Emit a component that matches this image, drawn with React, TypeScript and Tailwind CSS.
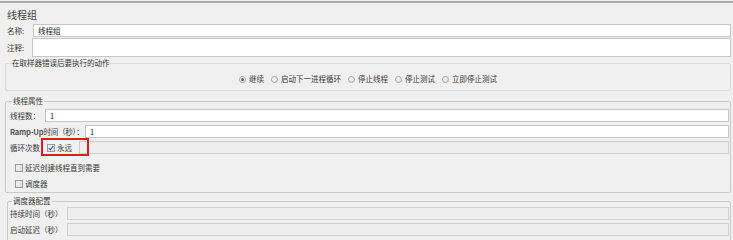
import React from 'react';

const Check = ({ checked = false }: { checked?: boolean }) => (
    <span className="flex h-[8px] w-[8px] shrink-0 items-center justify-center border border-[#9a9a9a] bg-gradient-to-br from-[#f4f4f4] to-[#dcdcdc]">
        {checked && (
            <svg width="6" height="6" viewBox="0 0 6 6">
                <path d="M0.8 3.2 L2.3 4.8 L5.3 0.8" fill="none" stroke="#2a5fb8" strokeWidth="1.1" />
            </svg>
        )}
    </span>
);

const Radio = ({ on = false, label }: { on?: boolean; label: string }) => (
    <span className="flex items-center gap-[3px]">
        <span className="flex h-[7px] w-[7px] items-center justify-center rounded-full border border-[#a4a4a4] bg-gradient-to-br from-[#fafafa] to-[#dedede]">
            {on && <span className="h-[3px] w-[3px] rounded-full bg-[#2f6fc0]" />}
        </span>
        <span>{label}</span>
    </span>
);

const Field = ({ value = '', disabled = false }: { value?: string; disabled?: boolean }) => (
    <div
        className={
            disabled
                ? 'h-full flex-1 border border-[#cfcfcf] bg-[#eeeeee]'
                : 'flex h-full flex-1 items-center border border-[#c6c6c6] bg-white pl-[4px] text-[#222]'
        }
    >
        {value}
    </div>
);

export default function App() {
    return (
        <div className="h-[240px] w-[733px] overflow-hidden whitespace-nowrap bg-[#f0f0f0] font-['Noto_Sans_CJK_SC',sans-serif] text-[7.5px] leading-none text-[#3a3a3a]">
            <div className="mt-[1px] h-[2px] bg-[#ababab]" />

            {/* title */}
            <div className="flex h-[21px] items-center pl-[7px] pt-[2px] text-[10px] text-[#444]">线程组</div>

            {/* name / comment */}
            <div className="mr-[2px] flex h-[13px] items-center">
                <span className="w-[33px] shrink-0 pl-[7px]">名称:</span>
                <Field value="线程组" />
            </div>
            <div className="mr-[2px] mt-[1px] flex h-[19px] items-center">
                <span className="w-[32px] shrink-0 pl-[7px]">注释:</span>
                <Field />
            </div>

            {/* error action */}
            <div className="mt-[2px] h-[8px] pl-[12px] leading-[8px]">在取样器错误后要执行的动作</div>
            <div className="-mt-[4px] ml-[5px] mr-[2px] flex h-[28px] items-center justify-center gap-[7px] rounded-[2px] border border-[#dcdcdc] pt-[4px]">
                <Radio on label="继续" />
                <Radio label="启动下一进程循环" />
                <Radio label="停止线程" />
                <Radio label="停止测试" />
                <Radio label="立即停止测试" />
            </div>

            {/* thread properties */}
            <div className="ml-[5px] mr-[2px] mt-[10px] h-[92px] rounded-[2px] border border-[#c9c9c9] pl-[4px] pr-[1px]">
                <div className="-mt-[5px] ml-[2px] h-[8px] w-fit bg-[#f0f0f0] px-[1px] leading-[8px]">线程属性</div>
                <div className="mt-[4px] flex h-[13px] items-center">
                    <span className="w-[35px] shrink-0">线程数：</span>
                    <Field value="1" />
                </div>
                <div className="mt-[3px] flex h-[13px] items-center">
                    <span className="w-[75px] shrink-0 tracking-[-0.2px]">
                        <b className="font-bold text-[#555]">Ramp-Up</b>时间（秒）：
                    </span>
                    <Field value="1" />
                </div>
                <div className="relative mt-[1px] flex h-[17px] items-center">
                    <span className="w-[31px] shrink-0">循环次数</span>
                    <span className="flex w-[38px] shrink-0 items-center gap-[2px] pl-[6px]">
                        <Check checked />
                        <span>永远</span>
                    </span>
                    <div className="h-[13px] flex-1">
                        <Field disabled />
                    </div>
                    <span className="absolute -top-[1px] left-[31px] h-[18px] w-[48px] border-2 border-[#e3191f]" />
                </div>
                <div className="ml-[5px] mt-[6px] flex h-[11px] items-center gap-[2px]">
                    <Check />
                    <span>延迟创建线程直到需要</span>
                </div>
                <div className="ml-[5px] mt-[5px] flex h-[11px] items-center gap-[2px]">
                    <Check />
                    <span>调度器</span>
                </div>
            </div>

            {/* scheduler */}
            <div className="ml-[7px] mr-[2px] mt-[8px] h-[50px] rounded-[2px] border border-[#c9c9c9] pl-[2px] pr-[1px]">
                <div className="-mt-[5px] ml-[2px] h-[8px] w-fit bg-[#f0f0f0] px-[1px] leading-[8px]">调度器配置</div>
                <div className="mt-[2px] flex h-[13px] items-center">
                    <span className="w-[57px] shrink-0">持续时间（秒）</span>
                    <Field disabled />
                </div>
                <div className="mt-[3px] flex h-[13px] items-center">
                    <span className="w-[57px] shrink-0">启动延迟（秒）</span>
                    <Field disabled />
                </div>
            </div>
        </div>
    );
}
